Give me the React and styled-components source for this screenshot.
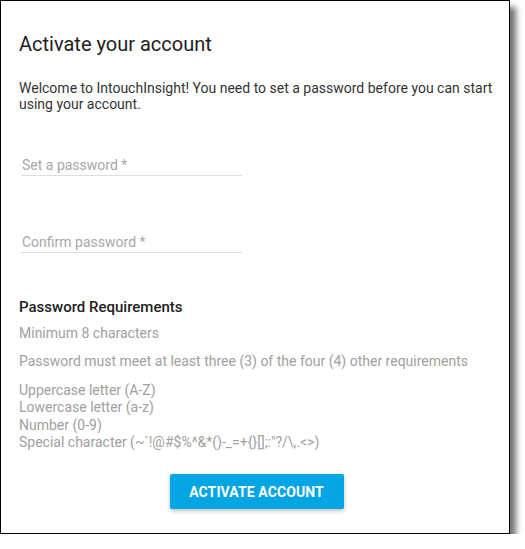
import React from "react";
import styled, { createGlobalStyle } from "styled-components";

const GlobalStyle = createGlobalStyle`
  html, body {
    margin: 0;
    padding: 0;
    background: #ffffff;
  }
  body {
    font-family: Roboto, "Noto Sans", Arial, sans-serif;
  }
  * { box-sizing: border-box; }
`;

const Card = styled.div`
  width: 510px;
  height: 534px;
  border: 1px solid #000;
  background: #fff;
  box-shadow: 6px 7px 6px rgba(0, 0, 0, 0.55);
  padding: 31px 10px 0 18px;
  display: flex;
  flex-direction: column;
`;

const Title = styled.h1`
  margin: 0;
  font-size: 20px;
  line-height: 24px;
  font-weight: 400;
  color: #212121;
`;

const Intro = styled.p`
  margin: 24px 0 0 0;
  font-size: 14px;
  line-height: 16px;
  color: #333;
`;

const Field = styled.input`
  display: block;
  width: 221px;
  height: 22px;
  margin: ${(p) => p.$gap}px 0 0 2px;
  padding: 0 1px;
  border: none;
  border-bottom: 1px solid #dedede;
  outline: none;
  font-family: Roboto, "Noto Sans", Arial, sans-serif;
  font-size: 14px;
  color: #333;
  background: transparent;
  &::placeholder {
    color: #a8a8a8;
  }
`;

const Heading = styled.h2`
  margin: 45.5px 0 0 0;
  font-size: 15px;
  line-height: 16px;
  font-weight: 500;
  color: #212121;
`;

const Note = styled.p`
  margin: ${(p) => p.$gap}px 0 0 0;
  font-size: 14px;
  line-height: 16px;
  color: #a0a0a0;
`;

const RuleList = styled.ul`
  list-style: none;
  margin: 12.5px 0 0 0;
  padding: 0;
  font-size: 14px;
  line-height: 17.5px;
  color: #a0a0a0;
`;

const Actions = styled.div`
  display: flex;
  justify-content: center;
  margin-top: 22.5px;
  padding-right: 5px;
`;

const Button = styled.button`
  width: 174px;
  height: 35px;
  border: none;
  border-radius: 2px;
  background: #03a6e2;
  color: #fff;
  font-family: Roboto, "Noto Sans", Arial, sans-serif;
  font-size: 14px;
  font-weight: 700;
  letter-spacing: 0.1px;
  box-shadow: 0 2px 4px rgba(0, 0, 0, 0.25);
  cursor: pointer;
`;

const rules = [
  "Uppercase letter (A-Z)",
  "Lowercase letter (a-z)",
  "Number (0-9)",
  "Special character (~`!@#$%^&*()-_=+{}[];:\"?/\\,.<>)",
];

export default function App() {
  return (
    <>
      <GlobalStyle />
      <Card>
        <Title>Activate your account</Title>
        <Intro>
          Welcome to IntouchInsight! You need to set a password before you can start using your account.
        </Intro>
        <Field type="password" placeholder="Set a password *" $gap={42} />
        <Field type="password" placeholder="Confirm password *" $gap={55} />
        <Heading>Password Requirements</Heading>
        <Note $gap={10}>Minimum 8 characters</Note>
        <Note $gap={12.5}>Password must meet at least three (3) of the four (4) other requirements</Note>
        <RuleList>
          {rules.map((r) => (
            <li key={r}>{r}</li>
          ))}
        </RuleList>
        <Actions>
          <Button type="button">ACTIVATE ACCOUNT</Button>
        </Actions>
      </Card>
    </>
  );
}
